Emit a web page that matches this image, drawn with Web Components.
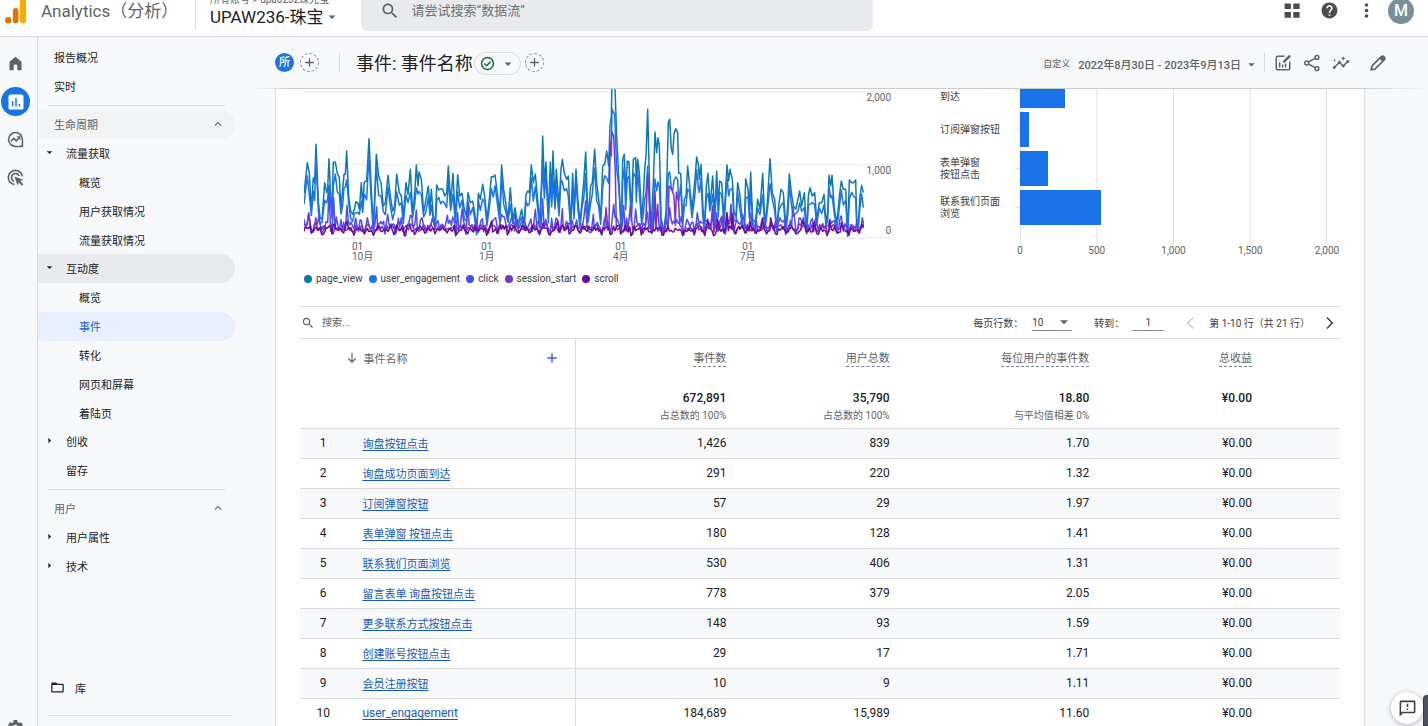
<!DOCTYPE html>
<html lang="zh-CN">
<head>
<meta charset="utf-8">
<title>Analytics（分析）</title>
<style>
  html, body {
    margin: 0;
    height: 100%;
  }

  body {
    font-family: Roboto, "Noto Sans CJK SC", sans-serif;
    font-size: 11px;
    color: #202124;
    background: #f8f9fb;
    overflow: hidden;
  }
</style>
</head>
<body>
<ga-app>
  <ga-app-bar slot="header" account="所有账号 &gt; upa0232珠光宝" property="UPAW236-珠宝"></ga-app-bar>
  <ga-rail slot="rail"></ga-rail>
  <ga-nav slot="nav">
    <nav-item>报告概况</nav-item>
    <nav-item>实时</nav-item>
    <nav-section label="生命周期" hovered>
      <nav-item level="1" arrow="open">流量获取</nav-item>
      <nav-group>
        <nav-item level="2">概览</nav-item>
        <nav-item level="2">用户获取情况</nav-item>
        <nav-item level="2">流量获取情况</nav-item>
      </nav-group>
      <nav-item level="1" arrow="open" parent>互动度</nav-item>
      <nav-group>
        <nav-item level="2">概览</nav-item>
        <nav-item level="2" current>事件</nav-item>
        <nav-item level="2">转化</nav-item>
        <nav-item level="2">网页和屏幕</nav-item>
        <nav-item level="2">着陆页</nav-item>
      </nav-group>
      <nav-item level="1" arrow="closed">创收</nav-item>
      <nav-item level="1">留存</nav-item>
    </nav-section>
    <nav-section label="用户">
      <nav-item level="1" arrow="closed">用户属性</nav-item>
      <nav-item level="1" arrow="closed">技术</nav-item>
    </nav-section>
  </ga-nav>
  <report-bar slot="toolbar" range="2022年8月30日 - 2023年9月13日">事件: 事件名称</report-bar>
  <report-card>
    <line-chart slot="charts"></line-chart>
    <bar-chart slot="charts"></bar-chart>
    <events-table></events-table>
  </report-card>
</ga-app>
<feedback-button></feedback-button>

<script>
class GaElement extends HTMLElement {
    constructor() {
        super();
        this.attachShadow({ mode: 'open' });
        const template = document.createElement('template');
        template.innerHTML = this.constructor.base + this.template();
        this.shadowRoot.appendChild(template.content.cloneNode(true));
    }

    static get base() {
        return `
<style>
  *, *::before, *::after { box-sizing: border-box; }
  :host { box-sizing: border-box; }
  button, input, select {
    margin: 0;
    padding: 0;
    border: 0;
    background: none;
    font: inherit;
    color: inherit;
    outline: none;
  }
  button {
    display: inline-flex;
    align-items: center;
    justify-content: center;
    cursor: pointer;
  }
  a { color: inherit; text-decoration: none; }
</style>`;
    }
}

const ICONS = {
    search: '<path d="M15.5 14h-.79l-.28-.27C15.41 12.59 16 11.11 16 9.5 16 5.91 13.09 3 9.5 3S3 5.91 3 9.5 5.91 16 9.5 16c1.61 0 3.09-.59 4.23-1.57l.27.28v.79l5 4.99L20.49 19l-4.99-5zm-6 0C7.01 14 5 11.99 5 9.5S7.01 5 9.5 5 14 7.01 14 9.5 11.99 14 9.5 14z"/>',
    apps: '<path d="M2 3h8v7H2zM13 3h8v7h-8zM2 14h8v7H2zM13 14h8v7h-8z"/>',
    help: '<path d="M12 2C6.48 2 2 6.48 2 12s4.48 10 10 10 10-4.48 10-10S17.52 2 12 2zm1 17h-2v-2h2v2zm2.07-7.75l-.9.92C13.45 12.9 13 13.5 13 15h-2v-.5c0-1.1.45-2.1 1.17-2.83l1.24-1.26c.37-.36.59-.86.59-1.41 0-1.1-.9-2-2-2s-2 .9-2 2H8c0-2.21 1.79-4 4-4s4 1.79 4 4c0 .88-.36 1.68-.93 2.25z"/>',
    more: '<circle cx="12" cy="5" r="2.3"/><circle cx="12" cy="12" r="2.3"/><circle cx="12" cy="19" r="2.3"/>',
    home: '<path d="M3.5 21.500V9.500L12 2.500l8.500 7V21.500H14.500v-6a2.500 2.500 0 0 0-5 0v6z"/>',
    reports: '<rect x="2" y="2" width="20" height="20" rx="2.500" fill="#fff"/><path d="M6.500 10.500h2V18h-2zM11 6.500h2V18h-2zM15.500 14.500h2V18h-2z" fill="#1a73e8"/>',
    explore: '<path fill="none" stroke="currentColor" stroke-width="2.200" d="M21.800 12v9.800H12A9.800 9.800 0 1 1 21.800 12z"/><path fill="none" stroke="currentColor" stroke-width="2.400" d="M5.500 14.500l4-4 3.500 3.500 4.500-4.500"/><path d="M13.500 7.500H19V13z"/><path d="M16 22.500q5-1 6.500-6.500v6.500z"/>',
    ads: '<path fill="none" stroke="currentColor" stroke-width="2.300" d="M10.500 21.800A10 10 0 1 1 21.800 10.500M10 17.200A5.600 5.600 0 1 1 17.200 10"/><path d="M10.500 10.500l12.500 4.500-4.500 2 4.500 4.500-2 2-4.500-4.500-1.500 4.500z"/>',
    settings: '<path d="M19.140 12.940c.04-.3.06-.61.06-.94 0-.32-.02-.64-.07-.94l2.030-1.580c.18-.14.23-.41.12-.61l-1.920-3.320c-.12-.22-.37-.29-.59-.22l-2.390.96c-.5-.38-1.030-.7-1.620-.94l-.36-2.540c-.04-.24-.24-.41-.48-.41h-3.840c-.24 0-.43.17-.47.41l-.36 2.540c-.59.24-1.130.57-1.620.94l-2.390-.96c-.22-.08-.47 0-.59.22L2.740 8.870c-.12.21-.08.47.12.61l2.030 1.580c-.05.3-.09.63-.09.94s.02.64.07.94l-2.030 1.580c-.18.14-.23.41-.12.61l1.920 3.320c.12.22.37.29.59.22l2.390-.96c.5.38 1.030.7 1.620.94l.36 2.540c.05.24.24.41.48.41h3.840c.24 0 .44-.17.47-.41l.36-2.540c.59-.24 1.130-.56 1.620-.94l2.390.96c.22.08.47 0 .59-.22l1.920-3.320c.12-.22.07-.47-.12-.61l-2.010-1.580zM12 15.600c-1.980 0-3.600-1.620-3.600-3.600s1.620-3.600 3.600-3.600 3.600 1.620 3.600 3.600-1.620 3.600-3.600 3.600z"/>',
    folder: '<path d="M20 6h-8l-2-2H4c-1.100 0-1.990.9-1.990 2L2 18c0 1.100.9 2 2 2h16c1.100 0 2-.9 2-2V8c0-1.100-.9-2-2-2zm0 12H4V8h16v10z"/>',
    up: '<path d="M12 8l-6 6 1.410 1.410L12 10.830l4.590 4.580L18 14z"/>',
    down: '<path d="M6 9.500l6 6 6-6z"/>',
    right: '<path d="M9.500 6l6 6-6 6z"/>',
    plus: '<path d="M20 13.200h-6.800V20h-2.400v-6.800H4v-2.400h6.800V4h2.400v6.800H20z"/>',
    check: '<circle cx="12" cy="12" r="9.500" fill="none" stroke="currentColor" stroke-width="2.400"/><path fill="none" stroke="currentColor" stroke-width="2.400" d="M7 12l3.500 3.500 6.500-6.500"/>',
    customize: '<path fill="none" stroke="currentColor" stroke-width="2" d="M14 3H5a2 2 0 0 0-2 2v14a2 2 0 0 0 2 2h14a2 2 0 0 0 2-2v-9"/><path d="M6.500 11h2v7h-2zM10.500 14h2v4h-2zM14.500 12.500h2V18h-2zM12 11.500V9.200L20.300 1l2.300 2.300-8.300 8.200z"/>',
    share: '<g fill="none" stroke="currentColor" stroke-width="2"><circle cx="18.500" cy="4.500" r="2.600"/><circle cx="5" cy="12" r="2.600"/><circle cx="18.500" cy="19.500" r="2.600"/><path d="M7.500 10.600L16 5.900M7.500 13.400L16 18.100"/></g>',
    insights: '<path d="M21 8c-1.450 0-2.260 1.440-1.930 2.510l-3.550 3.560c-.3-.09-.74-.09-1.040 0l-2.550-2.550C12.270 10.450 11.460 9 10 9c-1.450 0-2.270 1.440-1.930 2.520l-4.560 4.550C2.440 15.740 1 16.550 1 18c0 1.100.9 2 2 2 1.450 0 2.260-1.440 1.930-2.510l4.550-4.560c.3.090.74.090 1.040 0l2.550 2.550C12.730 16.550 13.540 18 15 18c1.450 0 2.270-1.440 1.930-2.520l3.560-3.550C21.560 12.260 23 11.450 23 10c0-1.100-.9-2-2-2zM15 9l.94-2.070L18 6l-2.060-.93L15 3l-.92 2.070L12 6l2.080.93zM3.500 11L4 9l2-.5L4 8l-.5-2L3 8l-2 .5L3 9z"/>',
    edit: '<path fill="none" stroke="currentColor" stroke-width="2.200" d="M3 21l1-5L16.500 3.500q1.500-1.500 3 0l1 1q1.500 1.500 0 3L8 20z"/><path d="M14 6l3-3.300 4.300 4.300L18 10z"/>',
    arrow: '<path d="M11 3h2v13.500l4.500-4.500 1.500 1.500-7 7-7-7L6.500 12l4.500 4.500z"/>',
    prev: '<path d="M16.500 3.500L15 2 5 12l10 10 1.500-1.500L8 12z"/>',
    next: '<path d="M7.500 3.500L9.300 1.800 19.500 12 9.300 22.200 7.500 20.500 16 12z"/>',
    feedback: '<path d="M20 2H4c-1.100 0-1.990.9-1.990 2L2 22l4-4h14c1.100 0 2-.9 2-2V4c0-1.100-.9-2-2-2zm0 14H5.170l-.59.59-.58.58V4h16v12zm-9-4h2v2h-2zm0-6h2v4h-2z"/>',
};

class GaIcon extends GaElement {
    template() {
        return `
<style>
  :host { display: inline-flex; width: var(--icon-size, 16px); height: var(--icon-size, 16px); flex: none; }
  svg { width: 100%; height: 100%; fill: currentColor; }
</style>
<svg viewBox="0 0 24 24" aria-hidden="true"></svg>`;
    }

    connectedCallback() {
        this.shadowRoot.querySelector('svg').innerHTML = ICONS[this.getAttribute('name')] || '';
    }
}

class GaApp extends GaElement {
    template() {
        return `
<style>
  :host { display: flex; flex-direction: column; height: 100vh; }
  .body { display: flex; flex: 1; min-height: 0; }
  main { display: flex; flex-direction: column; flex: 1; min-width: 0; }
</style>
<slot name="header"></slot>
<div class="body">
  <slot name="rail"></slot>
  <slot name="nav"></slot>
  <main>
    <slot name="toolbar"></slot>
    <slot></slot>
  </main>
</div>`;
    }
}

class GaAppBar extends GaElement {
    template() {
        return `
<style>
  :host {
    display: flex;
    align-items: flex-end;
    flex: none;
    height: 37px;
    overflow: hidden;
    background: #fff;
    border-bottom: 1px solid #dadce0;
  }
  header { display: flex; align-items: center; flex: 1; height: 51px; padding: 0 14px 0 5px; }
  .logo { width: 22px; height: 26px; margin-right: 14px; flex: none; }
  h1 { margin: 0; width: 154px; font-size: 17px; font-weight: 400; line-height: 24px; color: #5f6368; white-space: nowrap; }
  .property {
    display: flex;
    flex-direction: column;
    align-items: flex-start;
    padding: 0 0 2px 14px;
    border-left: 1px solid #dadce0;
    white-space: nowrap;
  }
  .account { font-size: 10px; line-height: 14px; color: #5f6368; }
  .name { gap: 1px; font-size: 17px; line-height: 20px; }
  .name ga-icon { color: #5f6368; --icon-size: 14px; }
  .search {
    display: flex;
    align-items: center;
    gap: 12px;
    flex: 0 1 512px;
    height: 40px;
    margin-left: 22px;
    padding: 0 19px;
    border-radius: 6px;
    background: #e9eaee;
    color: #5f6368;
  }
  .search ga-icon { --icon-size: 20px; }
  .search input { flex: 1; min-width: 0; font-size: 13px; line-height: 20px; }
  .search input::placeholder { color: #6c7075; opacity: 1; }
  .actions { display: flex; align-items: center; gap: 18px; margin-left: auto; color: #4a4d51; }
  .actions ga-icon { --icon-size: 19px; }
  .avatar { width: 26px; height: 26px; margin-left: -6px; border-radius: 50%; background: #78909c; color: #fff; font-size: 16px; font-weight: 500; }
</style>
<header>
  <svg class="logo" viewBox="0 0 22 26" aria-hidden="true">
    <circle cx="3.300" cy="22.200" r="3.200" fill="#e37400"/>
    <rect x="8" y="10" width="5.500" height="15.500" rx="2.700" fill="#e37400"/>
    <rect x="15" y="0" width="6" height="25.500" rx="3" fill="#f9ab00"/>
  </svg>
  <h1>Analytics（分析）</h1>
  <div class="property">
    <span class="account"></span>
    <button class="name"><span class="label"></span><ga-icon name="down"></ga-icon></button>
  </div>
  <label class="search">
    <ga-icon name="search"></ga-icon>
    <input type="search" placeholder="请尝试搜索“数据流”" aria-label="搜索">
  </label>
  <div class="actions">
    <button aria-label="应用"><ga-icon name="apps"></ga-icon></button>
    <button aria-label="帮助"><ga-icon name="help"></ga-icon></button>
    <button aria-label="更多"><ga-icon name="more"></ga-icon></button>
    <button class="avatar" aria-label="账号">M</button>
  </div>
</header>`;
    }

    connectedCallback() {
        this.shadowRoot.querySelector('.account').textContent = this.getAttribute('account');
        this.shadowRoot.querySelector('.label').textContent = this.getAttribute('property');
    }
}

class GaRail extends GaElement {
    template() {
        return `
<style>
  :host { display: block; flex: none; width: 38px; overflow: hidden; border-right: 1px solid #dadce0; color: #5f6368; }
  nav { display: flex; flex-direction: column; gap: 9px; height: 100%; padding: 12px 0 0 1px; }
  a { display: flex; align-items: center; justify-content: center; flex: none; width: 29px; height: 29px; border-radius: 50%; --icon-size: 17px; }
  .active { background: #1a73e8; --icon-size: 18px; }
  .settings { margin-top: auto; margin-bottom: -16px; --icon-size: 19px; }
</style>
<nav>
  <a href="#home" aria-label="首页"><ga-icon name="home"></ga-icon></a>
  <a href="#reports" class="active" aria-label="报告"><ga-icon name="reports"></ga-icon></a>
  <a href="#explore" aria-label="探索"><ga-icon name="explore"></ga-icon></a>
  <a href="#ads" aria-label="广告"><ga-icon name="ads"></ga-icon></a>
  <a href="#admin" class="settings" aria-label="管理"><ga-icon name="settings"></ga-icon></a>
</nav>`;
    }
}

class GaNav extends GaElement {
    template() {
        return `
<style>
  :host { display: flex; flex-direction: column; flex: none; width: 217px; padding: 6px 0 10px; }
  .library {
    display: flex;
    align-items: center;
    gap: 10px;
    height: 29px;
    margin: auto 0 12px;
    padding: 0 0 2px 12px;
    --icon-size: 15px;
  }
  .line { height: 1px; margin: 0 23px 0 10px; background: #dadce0; }
</style>
<slot></slot>
<a class="library" href="#library"><ga-icon name="folder"></ga-icon>库</a>
<div class="line"></div>`;
    }
}

class NavSection extends GaElement {
    template() {
        return `
<style>
  :host { display: block; }
  .line { height: 1px; margin: 4px 30px 4px 10px; background: #dadce0; }
  button { width: 197px; height: 29px; padding: 0 10px 2px 16px; border-radius: 0 15px 15px 0; justify-content: space-between; color: #5f6368; --icon-size: 14px; }
  :host([hovered]) button { background: #f1f3f4; }
</style>
<div class="line"></div>
<button><span></span><ga-icon name="up"></ga-icon></button>
<slot></slot>`;
    }

    connectedCallback() {
        this.shadowRoot.querySelector('span').textContent = this.getAttribute('label');
    }
}

class NavGroup extends GaElement {
    template() {
        return `<style>:host { display: block; margin-bottom: -1px; }</style><slot></slot>`;
    }
}

class NavItem extends GaElement {
    template() {
        return `
<style>
  :host { display: block; width: 197px; height: 29px; border-radius: 0 15px 15px 0; }
  a { display: flex; align-items: center; height: 100%; padding: 0 0 2px 16px; --icon-size: 11px; }
  ga-icon { margin-right: 11px; }
  :host([level="1"]) a { padding-left: 28px; }
  :host([level="1"][arrow]) a { padding-left: 6px; }
  :host([level="2"]) a { padding-left: 41px; }
  :host([parent]) { background: #e8eaed; }
  :host([current]) { background: #e8f0fe; color: #1967d2; }
</style>
<a href="#"><slot></slot></a>`;
    }

    connectedCallback() {
        const arrow = this.getAttribute('arrow');
        const link = this.shadowRoot.querySelector('a');
        if (!arrow || link.querySelector('ga-icon')) return;
        const icon = document.createElement('ga-icon');
        icon.setAttribute('name', arrow === 'open' ? 'down' : 'right');
        link.prepend(icon);
    }
}

class ReportBar extends GaElement {
    template() {
        return `
<style>
  :host {
    display: flex;
    align-items: center;
    flex: none;
    height: 52px;
    padding: 0 41px 0 20px;
    border-bottom: 1px solid;
    border-image: linear-gradient(to right, transparent, #c9cbcf 3%, #c9cbcf 94%, transparent) 1;
    white-space: nowrap;
    color: #5f6368;
  }
  .chip { width: 19px; height: 19px; border-radius: 50%; background: #1a73e8; color: #fff; font-size: 11px; font-weight: 500; line-height: 19px; }
  .add { width: 19px; height: 19px; border: 1px dashed #80868b; border-radius: 50%; --icon-size: 13px; }
  .chip + .add { margin-left: 6px; }
  .rule { width: 1px; height: 19px; background: #dadce0; }
  .add + .rule { margin-left: 20px; }
  .range + .rule { margin-left: 6px; }
  h2 { margin: 0 1px 0 16px; padding-top: 2px; font-size: 18px; font-weight: 400; line-height: 24px; color: #202124; }
  .status { gap: 6px; height: 23px; margin: 2px 4px 0 0; padding: 0 5px; border: 1px solid #dadce0; border-radius: 12px; --icon-size: 14px; }
  .status ga-icon:first-child { color: #137333; --icon-size: 15px; }
  .range { margin-left: auto; padding-top: 3px; gap: 4px; font-weight: 500; }
  .range small { padding: 0 3px; margin-right: 1px; background: #f1f3f4; font-size: 9px; font-weight: 400; line-height: 12px; }
  .range ga-icon { --icon-size: 13px; }
  .tools { display: flex; align-items: center; gap: 11px; padding-left: 9px; --icon-size: 18px; }
  .tools button:last-child { margin-left: 8px; }
</style>
<button class="chip">所</button>
<button class="add" aria-label="添加对比"><ga-icon name="plus"></ga-icon></button>
<span class="rule"></span>
<h2><slot></slot></h2>
<button class="status" aria-label="状态"><ga-icon name="check"></ga-icon><ga-icon name="down"></ga-icon></button>
<button class="add" aria-label="添加过滤条件"><ga-icon name="plus"></ga-icon></button>
<button class="range"><small>自定义</small><span class="dates"></span><ga-icon name="down"></ga-icon></button>
<span class="rule"></span>
<div class="tools">
  <button aria-label="自定义报告"><ga-icon name="customize"></ga-icon></button>
  <button aria-label="分享"><ga-icon name="share"></ga-icon></button>
  <button aria-label="数据洞见"><ga-icon name="insights"></ga-icon></button>
  <button aria-label="修改"><ga-icon name="edit"></ga-icon></button>
</div>`;
    }

    connectedCallback() {
        this.shadowRoot.querySelector('.dates').textContent = this.getAttribute('range');
    }
}

class ReportCard extends GaElement {
    template() {
        return `
<style>
  :host {
    display: block;
    flex: 1;
    min-height: 0;
    margin: 0 63px 0 20px;
    padding: 0 24px;
    overflow: hidden;
    background: #fff;
    border: solid #dadce0;
    border-width: 0 1px;
  }
  .charts {
    display: grid;
    grid-template-columns: 591fr 400fr;
    gap: 49px;
    height: 217px;
  }
</style>
<div class="charts"><slot name="charts"></slot></div>
<slot></slot>`;
    }
}

const SERIES = [
    { name: 'page_view', color: '#0b7ab0' },
    { name: 'user_engagement', color: '#1a73e8' },
    { name: 'click', color: '#4d4df0' },
    { name: 'session_start', color: '#7a33cf' },
    { name: 'scroll', color: '#6d0996' },
];

// x, y pairs in plot units; 458 is the zero line, 220 units per thousand
const PAGE_VIEW = '24,322 34,230 40,262 46,372 52,275 56,290 60,175 67,345 72,395 78,400 86,290 92,320 95,310 99,218 104,330 108,380 112,229 118,229 124,262 130,275 135,370 140,310 144,265 148,265 152,195 158,330 164,375 170,385 175,370 180,347 186,352 190,370 196,290 200,360 205,288 212,285 219,158 225,290 232,430 241,205 248,270 255,290 262,360 268,350 276,268 283,330 290,375 296,360 302,264 310,320 316,330 322,390 330,290 336,325 343,250 350,380 356,325 361,237 366,300 369,258 376,280 383,380 390,340 397,300 402,370 406,310 412,390 418,410 422,297 428,312 434,308 440,310 446,330 452,320 457,240 464,350 471,262 478,400 485,266 491,330 498,322 505,370 511,390 516,320 523,350 530,345 536,380 542,440 547,322 553,340 560,295 566,330 573,400 580,340 586,272 592,272 597,267 605,330 611,385 617,237 623,310 630,355 636,400 643,305 650,400 657,365 664,410 670,400 677,370 684,420 690,325 695,315 700,320 706,237 712,290 718,264 724,330 731,410 737,280 740,150 745,290 750,228 757,390 763,228 767,340 771,195 777,350 781,250 789,360 795,250 799,220 805,262 812,280 817,270 824,420 830,262 834,370 840,250 846,345 852,410 858,345 863,290 869,198 876,400 884,300 889,290 896,190 902,290 908,340 914,400 920,240 926,235 932,195 938,240 942,120 946,90 948,-20 956,-20 962,150 968,270 976,430 980,220 985,205 989,330 994,225 999,228 1006,380 1012,220 1019,215 1021,300 1025,220 1030,260 1037,400 1042,330 1046,250 1050,210 1055,70 1062,360 1066,420 1072,290 1077,138 1082,200 1086,155 1090,180 1096,420 1102,440 1110,380 1117,110 1121,100 1126,190 1130,205 1134,145 1139,128 1145,140 1148,262 1154,262 1160,400 1165,340 1170,330 1175,240 1180,290 1188,370 1196,290 1202,213 1207,235 1210,280 1215,235 1220,350 1225,430 1231,300 1236,262 1242,360 1250,270 1256,390 1262,255 1267,360 1271,285 1277,290 1284,400 1293,237 1298,285 1302,250 1309,280 1314,380 1320,390 1325,290 1332,330 1340,420 1345,420 1349,278 1356,310 1360,370 1364,258 1370,400 1378,410 1385,340 1392,370 1400,262 1407,420 1414,350 1422,218 1429,320 1436,340 1442,430 1448,360 1455,310 1462,320 1470,430 1476,340 1480,264 1486,320 1492,360 1499,370 1506,340 1511,315 1517,360 1525,320 1532,440 1537,330 1542,305 1549,330 1556,320 1562,400 1570,350 1577,350 1584,325 1590,410 1595,380 1599,268 1604,300 1608,268 1615,370 1623,410 1630,330 1636,285 1642,310 1649,310 1655,450 1660,282 1667,290 1672,290 1679,282 1682,400 1687,410 1692,330 1697,298 1702,320';
const CLICK_PEAKS = { 38: 380, 99: 318, 113: 335, 153: 358, 242: 362, 275: 385, 343: 388, 361: 372, 454: 388, 485: 380, 498: 370, 516: 350, 617: 385, 718: 370, 740: 338, 799: 368, 869: 345, 892: 385, 953: 355, 983: 358, 1019: 370, 1055: 378, 1077: 368, 1121: 365, 1204: 380, 1250: 360, 1262: 380, 1305: 355, 1340: 385, 1363: 380, 1404: 395, 1490: 362, 1636: 390 };
const SESSION_PEAKS = { 38: 385, 59: 395, 930: 365, 942: 200, 948: 138, 953: 150, 958: 260, 1003: 360, 1055: 265, 1060: 330, 1077: 315, 1085: 355, 1119: 300, 1127: 310, 1134: 330, 1141: 318, 1148: 350, 1250: 375, 1278: 390, 1293: 382, 1307: 378 };
const SCROLL_PEAKS = { 112: 415, 153: 405, 587: 405, 740: 412, 785: 405, 1235: 400, 1265: 400, 1293: 380, 1309: 385, 1363: 408, 1400: 400, 1424: 395, 1520: 405, 1555: 408, 1601: 405, 1636: 410, 1697: 415 };

class LineChart extends GaElement {
    template() {
        return `
<style>
  :host { display: block; min-width: 0; padding-left: 4px; font-size: 10px; line-height: 10px; color: #5f6368; }
  .plot { display: grid; grid-template-columns: 1fr 25px; gap: 2px; height: 150px; }
  svg { display: block; width: 100%; height: 150px; overflow: hidden; }
  polyline { fill: none; stroke-width: 1.5; vector-effect: non-scaling-stroke; stroke-linejoin: round; }
  .grid { stroke: #e8eaed; stroke-width: 1; vector-effect: non-scaling-stroke; }
  .values { display: grid; grid-template-rows: 73px 74px; padding-top: 2px; text-align: right; line-height: 12px; }
  .values div { display: flex; flex-direction: column; justify-content: space-between; border-top: 1px solid #e8eaed; }
  .values div:last-child { border-bottom: 1px solid #e8eaed; }
  .months { display: grid; grid-template-columns: 48fr 127fr 134fr 127fr 124fr; margin: 3px 27px 0 0; }
  .months span { grid-row: 1; justify-self: start; text-align: center; }
  .months span:nth-child(1) { grid-column: 2; text-align: left; }
  .months span:nth-child(2) { grid-column: 3; }
  .months span:nth-child(3) { grid-column: 4; }
  .months span:nth-child(4) { grid-column: 5; }
  ul { display: flex; gap: 6px; margin: 11px 0 0; padding: 0; list-style: none; line-height: 12px; color: #3c4043; }
  li { display: flex; align-items: center; gap: 4px; }
  li::before { content: ""; width: 8px; height: 8px; border-radius: 50%; background: var(--dot); }
</style>
<div class="plot">
  <svg viewBox="24 9 1680 450" preserveAspectRatio="none" role="img" aria-label="事件数">
    <path class="grid" d="M24 16.500H1704M24 235.500H1704M24 457.500H1704"/>
    ${SERIES.map((series) => `<polyline stroke="${series.color}" points="${this.points(series.name)}"/>`).join('')}
  </svg>
  <div class="values"><div><span>2,000</span></div><div><span>1,000</span><span>0</span></div></div>
</div>
<div class="months"><span>01<br>10月</span><span>01<br>1月</span><span>01<br>4月</span><span>01<br>7月</span></div>
<ul>${SERIES.map((series) => `<li style="--dot: ${series.color}">${series.name}</li>`).join('')}</ul>`;
    }

    points(name) {
        if (name === 'page_view') return PAGE_VIEW;
        if (name === 'user_engagement') return this.engagement();
        if (name === 'click') return this.wave(416, 46, 1, CLICK_PEAKS);
        if (name === 'session_start') return this.wave(425, 20, 5, SESSION_PEAKS);
        return this.wave(430, 20, 9, SCROLL_PEAKS);
    }

    engagement() {
        return PAGE_VIEW.split(' ').map((pair, i) => {
            const [x, y] = pair.split(',').map(Number);
            let share = 0.76 + 0.09 * Math.sin(i * 2.3);
            if (x > 1040 && x < 1150) share = 0.56;
            return `${x},${Math.round(458 - (458 - y) * share)}`;
        }).join(' ');
    }

    // Daily values: a weekly rhythm with a little noise, and the named peaks on top
    wave(level, spread, seed, peaks) {
        const days = {};
        for (let i = 0; i <= 380; i++) {
            const x = Math.round(24 + i * 4.42);
            const noise = Math.sin(i * 12.9898 + seed * 78.233) * 43758.5453;
            const random = noise - Math.floor(noise);
            const weekend = i % 7 > 4 ? 9 : -2;
            days[x] = Math.min(450, level + weekend + (random - 0.5) * spread);
        }
        for (const x in peaks) {
            Object.keys(days).filter((day) => Math.abs(day - x) < 3).forEach((day) => delete days[day]);
            days[x] = peaks[x];
        }
        return Object.keys(days).map((x) => `${x},${Math.round(days[x])}`).join(' ');
    }
}

class BarChart extends GaElement {
    template() {
        const bars = [
            ['询盘成功页面<br>到达', 291],
            ['订阅弹窗按钮', 57],
            ['表单弹窗<br>按钮点击', 180],
            ['联系我们页面<br>浏览', 530],
        ];
        return `
<style>
  :host { display: block; min-width: 0; padding-right: 13px; font-size: 10px; color: #3c4043; }
  .plot { display: grid; grid-template: 156px / 75px 5px 1fr; overflow: hidden; }
  .labels, .ticks, .bars { display: flex; flex-direction: column; justify-content: flex-end; padding-bottom: 18px; }
  .labels span { display: flex; align-items: center; flex: none; height: 39px; line-height: 12px; }
  .ticks i { flex: none; height: 39px; background: linear-gradient(#e0e2e5, #e0e2e5) 0 19px / 100% 1px no-repeat; }
  .bars {
    border-right: 1px solid #dfe1e5;
    background: linear-gradient(to right, #dfe1e5 1px, transparent 1px) 0 0 / 25% 100%;
  }
  .bars i { flex: none; height: 35px; margin: 2px 0; background: #1a73e8; }
  .axis { display: flex; justify-content: space-between; margin: 0 0 0 80px; line-height: 12px; color: #5f6368; }
  .axis span { display: flex; justify-content: center; width: 0; }
</style>
<div class="plot">
  <div class="labels">${bars.map(([label]) => `<span>${label}</span>`).join('')}</div>
  <div class="ticks">${bars.map(() => '<i></i>').join('')}</div>
  <div class="bars">${bars.map(([, value]) => `<i style="width: ${value / 20}%"></i>`).join('')}</div>
</div>
<div class="axis"><span>0</span><span>500</span><span>1,000</span><span>1,500</span><span>2,000</span></div>`;
    }
}

class EventsTable extends GaElement {
    template() {
        const columns = [
            ['事件数', '672,891', '占总数的 100%'],
            ['用户总数', '35,790', '占总数的 100%'],
            ['每位用户的事件数', '18.80', '与平均值相差 0%'],
            ['总收益', '¥0.00', ''],
        ];
        const rows = [
            ['询盘按钮点击', '1,426', '839', '1.70'],
            ['询盘成功页面到达', '291', '220', '1.32'],
            ['订阅弹窗按钮', '57', '29', '1.97'],
            ['表单弹窗 按钮点击', '180', '128', '1.41'],
            ['联系我们页面浏览', '530', '406', '1.31'],
            ['留言表单 询盘按钮点击', '778', '379', '2.05'],
            ['更多联系方式按钮点击', '148', '93', '1.59'],
            ['创建账号按钮点击', '29', '17', '1.71'],
            ['会员注册按钮', '10', '9', '1.11'],
            ['user_engagement', '184,689', '15,989', '11.60'],
        ];
        return `
<style>
  :host { display: block; }
  .tools { display: flex; align-items: center; height: 32px; padding: 0 4px 0 1px; border-top: 1px solid #dadce0; font-size: 10px; color: #3c4043; white-space: nowrap; }
  .filter { display: flex; align-items: center; gap: 7px; flex: 1; color: #5f6368; --icon-size: 14px; }
  .filter input { flex: 1; min-width: 0; line-height: 16px; }
  .filter input::placeholder { color: #5f6368; opacity: 1; }
  .size { display: grid; width: 40px; margin: 0 22px 0 9px; border-bottom: 1px solid #80868b; align-items: center; }
  .size select { grid-area: 1 / 1; appearance: none; height: 16px; width: 100%; }
  .size ga-icon { grid-area: 1 / 1; justify-self: end; pointer-events: none; color: #5f6368; --icon-size: 16px; }
  .page { width: 32px; height: 16px; margin: 0 20px 0 8px; border-bottom: 1px solid #80868b; text-align: center; }
  .tools button { --icon-size: 14px; }
  .prev { color: #bdc1c6; }
  .count { margin: 0 12px 0 11px; }
  table { width: 100%; border-collapse: collapse; table-layout: fixed; font-size: 12px; border-top: 1px solid #dadce0; }
  th, td { padding: 0; font-weight: 400; text-align: right; white-space: nowrap; }
  tr > :last-child { padding-right: 88px; }
  tr > :nth-child(2) { text-align: left; border-right: 1px solid #dadce0; }
  tbody td:first-child { text-align: center; padding-right: 16px; }
  tbody tr { height: 30px; border-top: 1px solid #dadce0; }
  tbody tr:nth-child(odd) { background: #f8f9fb; }
  tbody td { padding-bottom: 1px; }
  tbody a { font-size: 11px; color: #185abc; text-decoration: underline; text-underline-offset: 2px; }
  tbody a:lang(en) { font-size: 12px; }
  thead { color: #5f6368; font-size: 11px; }
  thead th { height: 38px; }
  thead th u { display: inline-block; padding-top: 3px; text-decoration: none; line-height: 14px; border-bottom: 1px dashed #80868b; }
  .event { display: flex; align-items: center; justify-content: space-between; padding-right: 16px; color: #5f6368; }
  .event button:first-child { gap: 4px; margin-left: -17px; --icon-size: 14px; }
  .event button:last-child { color: #3367d6; --icon-size: 14px; }
  .totals td { height: 52px; padding-top: 9px; vertical-align: middle; font-size: 10px; line-height: 17px; }
  .totals b { display: block; font-size: 12px; font-weight: 500; color: #202124; }
  .totals td:last-child { vertical-align: top; padding-top: 13px; }
</style>
<div class="tools">
  <label class="filter"><ga-icon name="search"></ga-icon><input type="text" placeholder="搜索..." aria-label="搜索"></label>
  <label for="size">每页行数：</label>
  <span class="size"><select id="size"><option>10</option><option>25</option><option>50</option></select><ga-icon name="down"></ga-icon></span>
  <label for="page">转到：</label>
  <input class="page" id="page" value="1">
  <button class="prev" aria-label="上一页"><ga-icon name="prev"></ga-icon></button>
  <span class="count">第 1-10 行（共 21 行）</span>
  <button aria-label="下一页"><ga-icon name="next"></ga-icon></button>
</div>
<table>
  <colgroup>
    <col style="width: 6%"><col style="width: 20.5%"><col style="width: 14.5%">
    <col style="width: 15.7%"><col style="width: 19.2%"><col>
  </colgroup>
  <thead>
    <tr>
      <th></th>
      <th><div class="event"><button><ga-icon name="arrow"></ga-icon>事件名称</button><button aria-label="添加维度"><ga-icon name="plus"></ga-icon></button></div></th>
      ${columns.map(([title]) => `<th><u>${title}</u></th>`).join('')}
    </tr>
    <tr class="totals">
      <td></td><td></td>
      ${columns.map(([, total, note]) => `<td><b>${total}</b>${note}</td>`).join('')}
    </tr>
  </thead>
  <tbody>
    ${rows.map(([name, ...values], i) => `
    <tr>
      <td>${i + 1}</td>
      <td><a href="#event"${/^\w+$/.test(name) ? ' lang="en"' : ''}>${name}</a></td>
      ${[...values, '¥0.00'].map((value) => `<td>${value}</td>`).join('')}
    </tr>`).join('')}
  </tbody>
</table>`;
    }
}

class FeedbackButton extends GaElement {
    template() {
        return `
<style>
  :host { position: fixed; right: 0; bottom: 0; display: flex; align-items: flex-end; }
  button { width: 32px; height: 32px; margin: 0 0 2px; border-radius: 50%; background: #fff; color: #3c4043; box-shadow: 0 1px 5px rgba(60, 64, 67, .4); --icon-size: 19px; }
  .handle { width: 5px; height: 31px; border: 1px solid #3a3d4a; border-right: 0; border-radius: 4px 0 0 0; background: #50535f; }
</style>
<button aria-label="发送反馈"><ga-icon name="feedback"></ga-icon></button>
<div class="handle"></div>`;
    }
}

customElements.define('ga-icon', GaIcon);
customElements.define('ga-app', GaApp);
customElements.define('ga-app-bar', GaAppBar);
customElements.define('ga-rail', GaRail);
customElements.define('ga-nav', GaNav);
customElements.define('nav-section', NavSection);
customElements.define('nav-group', NavGroup);
customElements.define('nav-item', NavItem);
customElements.define('report-bar', ReportBar);
customElements.define('report-card', ReportCard);
customElements.define('line-chart', LineChart);
customElements.define('bar-chart', BarChart);
customElements.define('events-table', EventsTable);
customElements.define('feedback-button', FeedbackButton);
</script>
</body>
</html>
